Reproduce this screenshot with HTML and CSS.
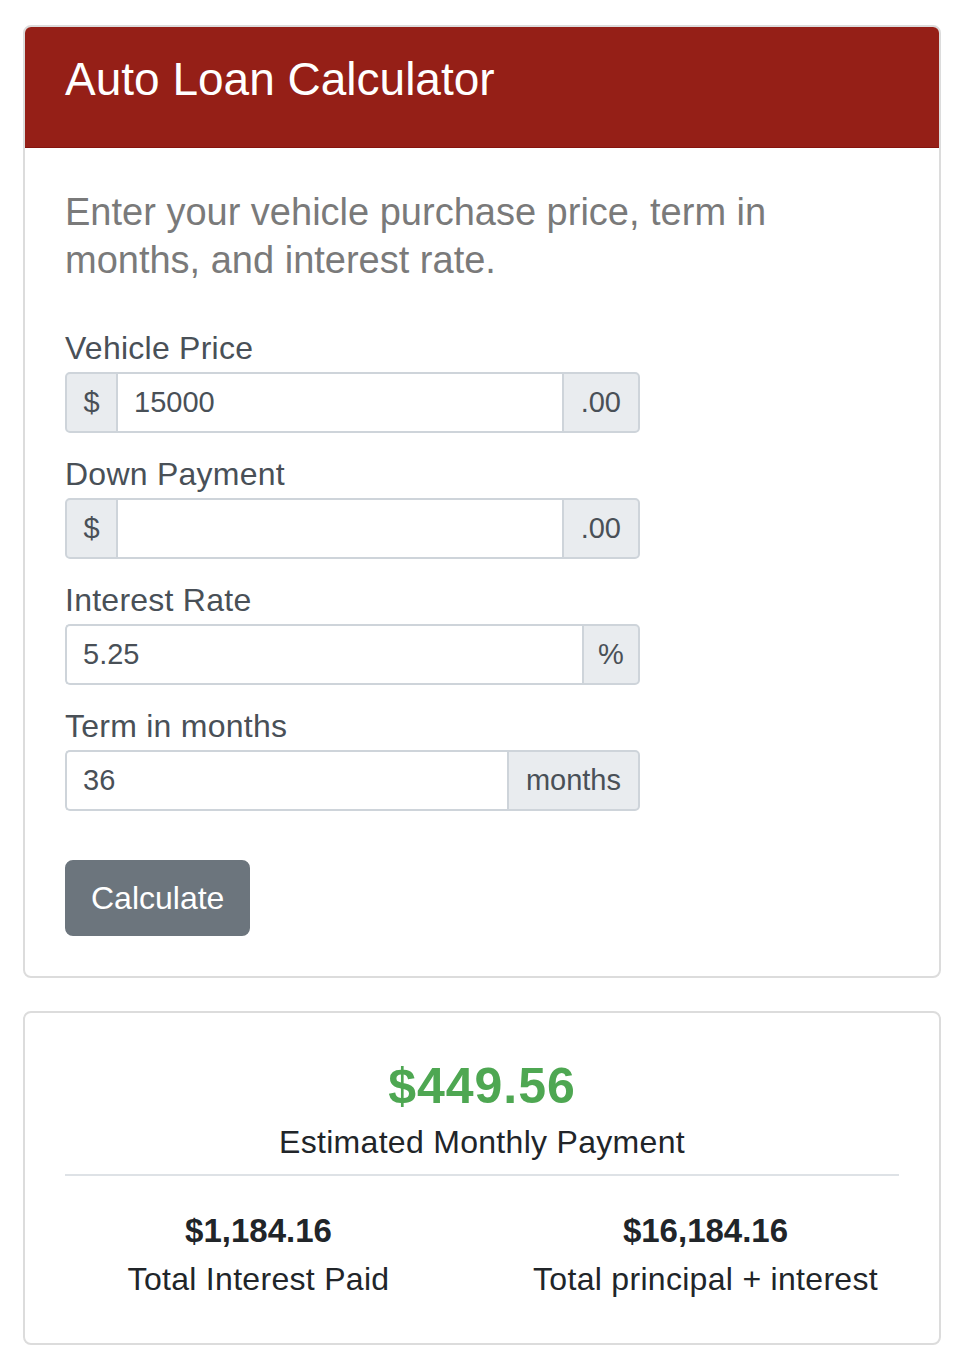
FILE: index.html
```html
<!DOCTYPE html>
<html lang="en">
<head>
<meta charset="utf-8">
<title>Auto Loan Calculator</title>
<link rel="stylesheet" href="styles.css">
</head>
<body>
<main class="page">
  <section class="card">
    <header class="card-header">
      <h1 class="card-title">Auto Loan Calculator</h1>
    </header>
    <div class="card-body">
      <p class="lead">Enter your vehicle purchase price, term in months, and interest rate.</p>
      <form class="form">
        <div class="field">
          <label class="label" for="price">Vehicle Price</label>
          <div class="input-group">
            <span class="addon addon-pre">$</span>
            <input class="control" id="price" type="text" value="15000">
            <span class="addon addon-post">.00</span>
          </div>
        </div>
        <div class="field">
          <label class="label" for="down">Down Payment</label>
          <div class="input-group">
            <span class="addon addon-pre">$</span>
            <input class="control" id="down" type="text" value="">
            <span class="addon addon-post">.00</span>
          </div>
        </div>
        <div class="field">
          <label class="label" for="rate">Interest Rate</label>
          <div class="input-group">
            <input class="control control-first" id="rate" type="text" value="5.25">
            <span class="addon addon-post addon-pct">%</span>
          </div>
        </div>
        <div class="field">
          <label class="label" for="term">Term in months</label>
          <div class="input-group">
            <input class="control control-first" id="term" type="text" value="36">
            <span class="addon addon-post">months</span>
          </div>
        </div>
        <button class="btn" type="button">Calculate</button>
      </form>
    </div>
  </section>

  <section class="card result">
    <div class="result-main">
      <div class="payment">$449.56</div>
      <div class="payment-label">Estimated Monthly Payment</div>
    </div>
    <hr class="divider">
    <div class="totals">
      <div class="total">
        <div class="total-value">$1,184.16</div>
        <div class="total-label">Total Interest Paid</div>
      </div>
      <div class="total">
        <div class="total-value">$16,184.16</div>
        <div class="total-label">Total principal + interest</div>
      </div>
    </div>
  </section>
</main>
</body>
</html>
```
FILE: styles.css
```css
* { box-sizing: border-box; }

html, body {
  margin: 0;
  padding: 0;
  background: #ffffff;
}

body {
  font-family: "Liberation Sans", Arial, sans-serif;
  color: #212529;
}

.page {
  width: 918px;
  margin: 25px 0 0 23px;
  display: flex;
  flex-direction: column;
  gap: 33px;
}

.card {
  border: 2px solid #dcdcdc;
  border-radius: 8px;
  overflow: hidden;
  background: #fff;
}

.card-header {
  background: #951f17;
  padding: 24px 40px 23px;
  border-bottom: 1px solid #85140e;
}

.card-title {
  margin: 0 0 16px;
  color: #ffffff;
  font-size: 46px;
  line-height: 57px;
  font-weight: 400;
  letter-spacing: 0;
}

.card-body {
  padding: 40px 40px 40px;
}

.lead {
  margin: 0 0 40px;
  color: #7a7a7a;
  font-size: 38px;
  line-height: 48px;
  font-weight: 400;
  max-width: 720px;
}

.form {
  display: flex;
  flex-direction: column;
}

.field {
  display: flex;
  flex-direction: column;
  margin-bottom: 17px;
}

.label {
  color: #495057;
  font-size: 32px;
  line-height: 48px;
  letter-spacing: 0.25px;
}

.input-group {
  display: flex;
  width: 575px;
  height: 61px;
}

.addon {
  display: flex;
  align-items: center;
  justify-content: center;
  background: #e9ecef;
  border: 2px solid #ced4da;
  color: #495057;
  font-size: 29px;
  padding: 0 17px;
  flex: none;
}

.addon-pre {
  border-radius: 5px 0 0 5px;
  width: 53px;
}

.addon-post {
  border-radius: 0 5px 5px 0;
}

.addon-pct {
  width: 58px;
}

.control {
  flex: 1;
  min-width: 0;
  height: 100%;
  border: 2px solid #ced4da;
  border-left: none;
  border-right: none;
  padding: 0 16px;
  font-family: inherit;
  font-size: 29px;
  color: #495057;
  background: #fff;
  outline: none;
}

.control-first {
  border-left: 2px solid #ced4da;
  border-radius: 5px 0 0 5px;
}

.btn {
  align-self: flex-start;
  margin-top: 32px;
  background: #6c757d;
  border: 2px solid #6c757d;
  border-radius: 8px;
  color: #fff;
  font-family: inherit;
  font-size: 32px;
  line-height: 48px;
  padding: 12px 24px;
  cursor: pointer;
}

.result {
  padding: 40px 40px 40px;
}

.result-main {
  display: flex;
  flex-direction: column;
  align-items: center;
}

.payment {
  color: #4ea752;
  font-size: 50px;
  line-height: 58px;
  font-weight: 700;
  letter-spacing: 1px;
  margin: 4px 0 3px;
}

.payment-label {
  font-size: 32px;
  line-height: 48px;
  letter-spacing: 0.3px;
}

.divider {
  margin: 8px 0 31px;
  border: none;
  border-top: 2px solid #dee2e6;
}

.totals {
  display: grid;
  grid-template-columns: 1fr 1fr;
  margin: 0 -30px;
}

.total {
  display: flex;
  flex-direction: column;
  align-items: center;
}

.total-value {
  font-size: 33px;
  line-height: 48px;
  font-weight: 700;
}

.total-label {
  font-size: 32px;
  line-height: 48px;
  letter-spacing: 0.3px;
}
```
